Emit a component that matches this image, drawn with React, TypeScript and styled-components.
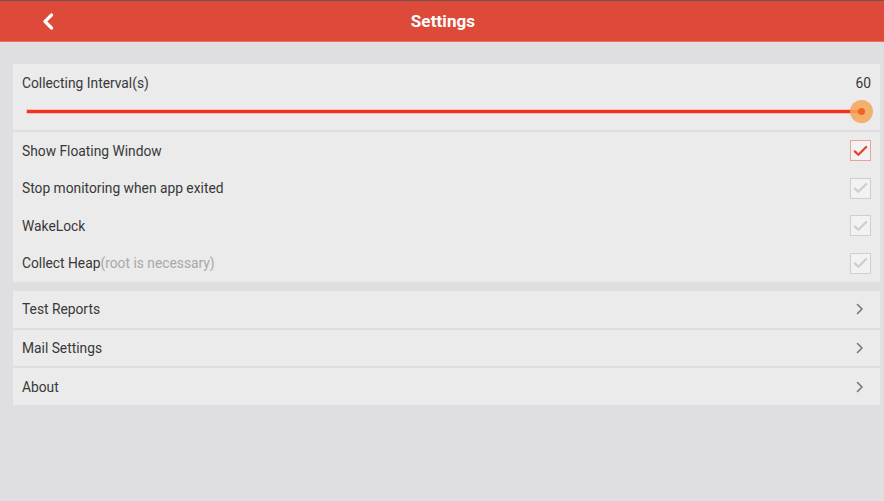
import React from "react";
import styled, { createGlobalStyle } from "styled-components";

const Global = createGlobalStyle`
  html, body { margin: 0; padding: 0; }
  body {
    background: #dfdfe2;
    font-family: Roboto, "Noto Sans", sans-serif;
    width: 884px;
    height: 501px;
    overflow: hidden;
  }
`;

const Page = styled.div`
  width: 884px;
  height: 501px;
  background: #dfdfe2;
  display: flex;
  flex-direction: column;
`;

const TopBar = styled.header`
  height: 40px;
  background: #dd4a3a;
  border-top: 1px solid #6a5552;
  border-bottom: 1px solid #f26a58;
  display: flex;
  align-items: center;
  justify-content: center;
  position: relative;
`;

const BackButton = styled.div`
  position: absolute;
  left: 40px;
  top: 11px;
  width: 16px;
  height: 18px;
  display: flex;
  align-items: center;
  justify-content: center;
`;

const Title = styled.h1`
  margin: 0 0 0 2px;
  font-size: 17px;
  font-weight: 700;
  color: #ffffff;
  letter-spacing: 0.1px;
`;

const Content = styled.div`
  padding: 22px 4px 0 13px;
  display: flex;
  flex-direction: column;
  gap: 9px;
`;

const Card = styled.section`
  background: #ebebeb;
  display: flex;
  flex-direction: column;
`;

const SliderRow = styled.div`
  height: 66px;
  border-bottom: 2px solid #dedede;
  padding: 0 9px;
  display: flex;
  flex-direction: column;
`;

const SliderHead = styled.div`
  display: flex;
  justify-content: space-between;
  align-items: center;
  height: 38px;
`;

const Label = styled.span`
  font-size: 13.8px;
  color: #383838;
`;

const Hint = styled.span`
  color: #a8a8a8;
`;

const Track = styled.div`
  position: relative;
  margin: 0 9px 0 5px;
  height: 3px;
  margin-top: 8px;
  background: #f0311d;
  box-shadow: 0 0 0 1px rgba(255, 120, 100, 0.35);
`;

const Thumb = styled.div`
  position: absolute;
  right: -11px;
  top: -10px;
  width: 23px;
  height: 23px;
  border-radius: 50%;
  background: rgba(245, 166, 87, 0.85);
  display: flex;
  align-items: center;
  justify-content: center;
  &::after {
    content: "";
    width: 7px;
    height: 7px;
    border-radius: 50%;
    background: #f1641f;
  }
`;

const Row = styled.div<{ $h?: number; $divider?: boolean; $right?: number }>`
  height: ${(p) => p.$h ?? 37.5}px;
  padding: 0 ${(p) => p.$right ?? 9}px 0 9px;
  display: flex;
  align-items: center;
  justify-content: space-between;
  border-bottom: ${(p) => (p.$divider ? "2px solid #dedede" : "none")};
  box-sizing: border-box;
`;

const Check = styled.div<{ $on?: boolean }>`
  width: 19px;
  height: 19px;
  border: 1px solid ${(p) => (p.$on ? "#e8a39b" : "#cfcfcf")};
  background: #f2f2f2;
  display: flex;
  align-items: center;
  justify-content: center;
`;

const CheckMark = ({ on }: { on?: boolean }) => (
  <svg width="15" height="12" viewBox="0 0 15 12">
    <path
      d="M1.8 6.4 L5.4 9.8 L13.2 2"
      fill="none"
      stroke={on ? "#e0402c" : "#cdcdcd"}
      strokeWidth="2.2"
      strokeLinecap="round"
      strokeLinejoin="round"
    />
  </svg>
);

const Chevron = () => (
  <svg width="8" height="12" viewBox="0 0 8 12">
    <path d="M1.5 1.5 L6 6 L1.5 10.5" fill="none" stroke="#777" strokeWidth="1.6" strokeLinecap="round" strokeLinejoin="round" />
  </svg>
);

const checks = [
  { label: "Show Floating Window", on: true },
  { label: "Stop monitoring when app exited" },
  { label: "WakeLock" },
  { label: "Collect Heap", hint: "(root is necessary)" },
];

const links = ["Test Reports", "Mail Settings", "About"];

export default function App() {
  return (
    <Page>
      <Global />
      <TopBar>
        <BackButton>
          <svg width="12" height="17" viewBox="0 0 12 17">
            <path d="M9.5 2 L3 8.5 L9.5 15" fill="none" stroke="#fff" strokeWidth="3.2" strokeLinecap="round" strokeLinejoin="round" />
          </svg>
        </BackButton>
        <Title>Settings</Title>
      </TopBar>
      <Content>
        <Card>
          <SliderRow>
            <SliderHead>
              <Label>Collecting Interval(s)</Label>
              <Label>60</Label>
            </SliderHead>
            <Track>
              <Thumb />
            </Track>
          </SliderRow>
          {checks.map((c) => (
            <Row key={c.label}>
              <Label>
                {c.label}
                {c.hint && <Hint>{c.hint}</Hint>}
              </Label>
              <Check $on={c.on}>
                <CheckMark on={c.on} />
              </Check>
            </Row>
          ))}
        </Card>
        <Card>
          {links.map((l, i) => (
            <Row key={l} $h={i === 2 ? 37 : 38.5} $right={16} $divider={i < links.length - 1}>
              <Label>{l}</Label>
              <Chevron />
            </Row>
          ))}
        </Card>
      </Content>
    </Page>
  );
}
